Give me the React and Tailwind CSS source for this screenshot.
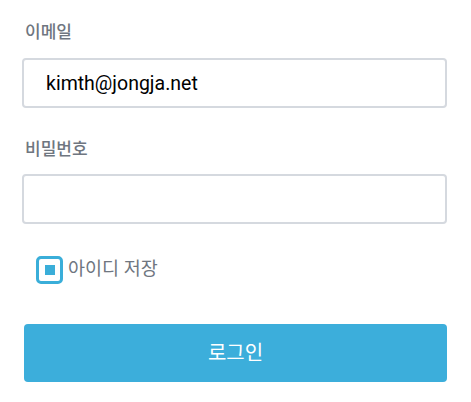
import { useState } from 'react'

export default function App() {
  const [email, setEmail] = useState('kimth@jongja.net')
  const [password, setPassword] = useState('')
  const [remember, setRemember] = useState(true)

  return (
    <div className="min-h-[402px] bg-white font-['Roboto','Noto_Sans_CJK_KR',sans-serif]">
      <form className="w-[425px] ml-[22px] pt-[20px] flex flex-col" onSubmit={(e) => e.preventDefault()}>
        <label className="h-[24px] leading-[24px] pl-[3px] text-[17px] font-medium text-[#6f7680]">이메일</label>
        <input
          value={email}
          onChange={(e) => setEmail(e.target.value)}
          className="mt-[14px] h-[50px] w-full border-2 border-[#d5d9df] rounded-[4px] px-[22px] text-[19.5px] text-black outline-none"
        />
        <label className="mt-[29px] h-[24px] leading-[24px] pl-[3px] text-[17px] font-medium text-[#6f7680]">비밀번호</label>
        <input
          type="password"
          value={password}
          onChange={(e) => setPassword(e.target.value)}
          className="mt-[13px] h-[50px] w-full border-2 border-[#d5d9df] rounded-[4px] px-[22px] text-[18px] outline-none"
        />
        <div className="mt-[32px] ml-[14px] flex items-center gap-[5px] cursor-pointer" onClick={() => setRemember(!remember)}>
          <span className="w-[27px] h-[28px] border-[3px] border-[#3aaed9] rounded-[5px] flex items-center justify-center">
            {remember && <span className="w-[10px] h-[10px] bg-[#3aaed9]" />}
          </span>
          <span className="text-[18.5px] text-[#6f7680]">아이디 저장</span>
        </div>
        <button type="submit" className="mt-[40px] ml-[2px] w-[423px] h-[58px] rounded-[4px] bg-[#3caedb] text-white text-[20px]">로그인</button>
      </form>
    </div>
  )
}
